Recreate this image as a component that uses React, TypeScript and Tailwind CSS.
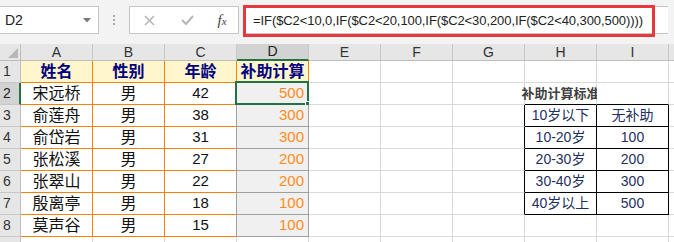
import React from "react";

const FONT = "font-['Liberation_Sans','Noto_Sans_CJK_SC',sans-serif]";

const data: string[][] = [
  ["姓名", "性别", "年龄", "补助计算"],
  ["宋远桥", "男", "42", "500"],
  ["俞莲舟", "男", "38", "300"],
  ["俞岱岩", "男", "31", "300"],
  ["张松溪", "男", "27", "200"],
  ["张翠山", "男", "22", "200"],
  ["殷离亭", "男", "18", "100"],
  ["莫声谷", "男", "15", "100"],
];

const std: string[][] = [
  ["10岁以下", "无补助"],
  ["10-20岁", "100"],
  ["20-30岁", "200"],
  ["30-40岁", "300"],
  ["40岁以上", "500"],
];

const letters = ["A", "B", "C", "D", "E", "F", "G", "H", "I"];

function Toolbar() {
  return (
    <div className="h-[44px] flex items-start pt-[6px]">
      <div className="w-[99px] h-[28px] bg-white border border-l-0 border-[#c6c6c6] flex items-center justify-between pl-[5px] pr-[7px]">
        <span className="text-[14px] text-[#222]">D2</span>
        <svg width="8" height="5" viewBox="0 0 8 5"><path d="M0 0 L8 0 L4 4.5 Z" fill="#7a7a7a" /></svg>
      </div>
      <div className="w-[30px] h-[28px] flex flex-col items-center justify-center gap-[2px]">
        <div className="w-[2px] h-[2px] bg-[#a8a8a8]" />
        <div className="w-[2px] h-[2px] bg-[#a8a8a8]" />
        <div className="w-[2px] h-[2px] bg-[#a8a8a8]" />
      </div>
      <div className="w-[110px] h-[28px] bg-white border border-[#c6c6c6] flex items-center">
        <div className="w-[38px] flex justify-center">
          <svg width="11" height="11" viewBox="0 0 11 11"><path d="M1 1 L10 10 M10 1 L1 10" stroke="#b5b5b5" strokeWidth="1.5" /></svg>
        </div>
        <div className="w-[38px] flex justify-center">
          <svg width="13" height="10" viewBox="0 0 13 10"><path d="M1 5 L5 9 L12 1" stroke="#b5b5b5" strokeWidth="2" fill="none" /></svg>
        </div>
        <div className="flex-1 flex justify-center">
          <span className="font-['Liberation_Serif',serif] italic text-[15px] text-[#444] leading-none">
            f<span className="text-[11px]">x</span>
          </span>
        </div>
      </div>
      <div className="ml-[4px] w-[425px] h-[28px] bg-white border-y border-[#c6c6c6] flex items-stretch">
        <div className="w-[412px] h-[32px] -mt-[2px] border-[3px] border-[#e8383d] flex items-center pl-[7px]">
          <span className="font-['Liberation_Sans',sans-serif] text-[13px] text-[#222] tracking-[-0.08px]">
            =IF($C2&lt;10,0,IF($C2&lt;20,100,IF($C2&lt;30,200,IF($C2&lt;40,300,500))))
          </span>
        </div>
      </div>
    </div>
  );
}

function HeaderRow() {
  return (
    <div className="flex h-[17px]">
      <div className="w-[21px] shrink-0 bg-[#e6e6e6] border-r border-b border-[#bdbdbd] relative">
        <svg className="absolute right-[2px] bottom-[2px]" width="10" height="10" viewBox="0 0 10 10"><path d="M10 0 L10 10 L0 10 Z" fill="#b8b8b8" /></svg>
      </div>
      {letters.map((l) => (
        <div
          key={l}
          className={`w-[72px] shrink-0 flex items-center justify-center text-[14px] border-r border-[#c8c8c8] ${
            l === "D" ? "bg-[#d3d3d3] border-b-2 border-b-[#217346] text-[#222]" : "bg-[#e6e6e6] border-b border-b-[#bdbdbd] text-[#333]"
          }`}
        >
          {l}
        </div>
      ))}
      <div className="flex-1 bg-[#e6e6e6] border-b border-[#bdbdbd]" />
    </div>
  );
}

function Row({ r }: { r: number }) {
  const d = r <= 8 ? data[r - 1] : null;
  const selectedRow = r === 2;
  const cells: React.ReactNode[] = [];
  for (let c = 0; c < 9; c++) {
    let cls = "w-[72px] shrink-0 h-full flex items-center border-r border-b relative ";
    let content: React.ReactNode = null;
    if (d && c < 3) {
      cls += r === 1 ? "bg-[#fff6cc] border-[#ff8000] justify-center " : "bg-white border-[#ff8000] justify-center ";
      if (c === 2 && r >= 2) cls += "border-r-[#a0a0a0] ";
      content =
        r === 1 ? (
          <span className="text-[16px] font-bold text-[#000080]">{d[c]}</span>
        ) : (
          <span className={`${c === 2 ? "text-[15px]" : "text-[16px]"} text-[#111]`}>{d[c]}</span>
        );
    } else if (d && c === 3) {
      if (r === 1) {
        cls += "bg-[#fff6cc] border-[#ff8000] justify-center ";
        content = <span className="text-[16px] font-bold text-[#000080]">{d[c]}</span>;
      } else {
        cls += "bg-[#f0f0f0] border-[#a0a0a0] justify-end pr-[4px] ";
        content = <span className="text-[15px] text-[#ff8c1a]">{d[c]}</span>;
      }
    } else {
      cls += "bg-white border-[#d9d9d9] ";
      if (r === 2 && c === 7) {
        cls += "justify-center overflow-visible ";
        content = (
          <span className="whitespace-nowrap text-[13px] font-bold text-[#404040]">补助计算标准</span>
        );
      }
      if (r >= 3 && r <= 7 && c === 6) cls += "border-r-black ";
      if (r === 2 && (c === 7 || c === 8)) cls += "border-b-black ";
      if (r >= 3 && r <= 7 && (c === 7 || c === 8)) {
        cls += "border-black justify-center ";
        content = <span className="text-[14px] text-[#1f3060]">{std[r - 3][c - 7]}</span>;
      }
    }
    cells.push(
      <div key={c} className={cls}>
        {content}
        {r === 2 && c === 3 && (
          <div className="absolute -left-[2px] -top-[2px] w-[74px] h-[24px] border-2 border-[#217346] pointer-events-none">
            <div className="absolute -right-[4px] -bottom-[4px] w-[6px] h-[6px] bg-[#217346] border border-white" />
          </div>
        )}
      </div>
    );
  }
  return (
    <div className="flex h-[22px]">
      <div
        className={`w-[21px] shrink-0 flex items-center pl-[3px] text-[14px] border-b border-[#c8c8c8] ${
          selectedRow ? "bg-[#d3d3d3] border-r-2 border-r-[#217346] text-[#222]" : "bg-[#e6e6e6] border-r border-r-[#bdbdbd] text-[#333]"
        }`}
      >
        {r <= 8 ? r : null}
      </div>
      {cells}
      <div className="flex-1 bg-white border-b border-[#d9d9d9]" />
    </div>
  );
}

export default function App() {
  return (
    <div className={`w-[674px] h-[242px] overflow-hidden bg-[#f3f3f3] ${FONT}`}>
      <Toolbar />
      <HeaderRow />
      {[1, 2, 3, 4, 5, 6, 7, 8, 9].map((r) => (
        <Row key={r} r={r} />
      ))}
    </div>
  );
}
